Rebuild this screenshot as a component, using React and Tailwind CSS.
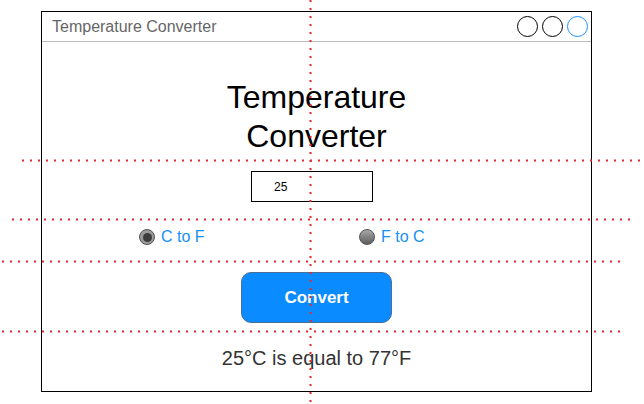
import React from 'react';

function Guides() {
  // red dotted guide lines drawn over the mockup
  return (
    <svg className="absolute inset-0 pointer-events-none" width="644" height="404">
      <g stroke="#e8262b" strokeWidth="2" strokeDasharray="2 6">
        <line x1="310.5" y1="0" x2="310.5" y2="404" />
        <line x1="22" y1="160.5" x2="644" y2="160.5" />
        <line x1="12" y1="219.5" x2="632" y2="219.5" />
        <line x1="2" y1="261.5" x2="622" y2="261.5" />
        <line x1="2" y1="331.5" x2="622" y2="331.5" />
      </g>
    </svg>
  );
}

function Radio({ checked, label }) {
  return (
    <div className="flex items-center gap-[6px]">
      {checked ? (
        <span className="w-4 h-4 rounded-full border border-[#555] bg-[#9a9a9a] flex items-center justify-center">
          <span className="w-[9px] h-[9px] rounded-full bg-[#3c3c3c]" />
        </span>
      ) : (
        <span className="w-4 h-4 rounded-full border border-[#555] bg-gradient-to-b from-[#a8a8a8] to-[#5e5e5e]" />
      )}
      <span className="text-[16px] text-[#1590f7] leading-5">{label}</span>
    </div>
  );
}

export default function App() {
  return (
    <div className="relative w-[644px] h-[404px] bg-white overflow-hidden" style={{ fontFamily: '"Liberation Sans", Arial, sans-serif' }}>
      <div className="ml-[41px] mt-[11px] w-[551px] h-[381px] border border-black flex flex-col">
        <div className="h-[30px] border-b border-[#bbbbbb] flex items-center justify-between pl-[10px] pr-[3px]">
          <span className="text-[16px] text-[#666666]">Temperature Converter</span>
          <div className="flex items-center gap-[4px]">
            <span className="w-[21px] h-[21px] rounded-full border border-black" />
            <span className="w-[21px] h-[21px] rounded-full border border-black" />
            <span className="w-[21px] h-[21px] rounded-full border border-[#1e90ff]" />
          </div>
        </div>

        <div className="flex flex-col items-center">
          <h1 className="mt-[36px] text-[32px] leading-[39px] text-black text-center">
            Temperature
            <br />
            Converter
          </h1>
        </div>

        <div className="mt-[15px] ml-[209px] w-[122px] h-[31px] border border-black flex items-center pl-[22px] text-[12px] text-black">
          25
        </div>

        <div className="mt-[25px] flex pl-[97px]">
          <div className="w-[220px]">
            <Radio checked label="C to F" />
          </div>
          <Radio label="F to C" />
        </div>

        <div className="flex flex-col items-center">
          <button className="mt-[25px] w-[151px] h-[51px] rounded-[10px] bg-[#0a8bff] border border-[#4d6f91] text-white font-bold text-[17px]">
            Convert
          </button>
          <p className="mt-[23px] text-[20px] leading-6 text-[#333333]">25°C is equal to 77°F</p>
        </div>
      </div>
      <Guides />
    </div>
  );
}
